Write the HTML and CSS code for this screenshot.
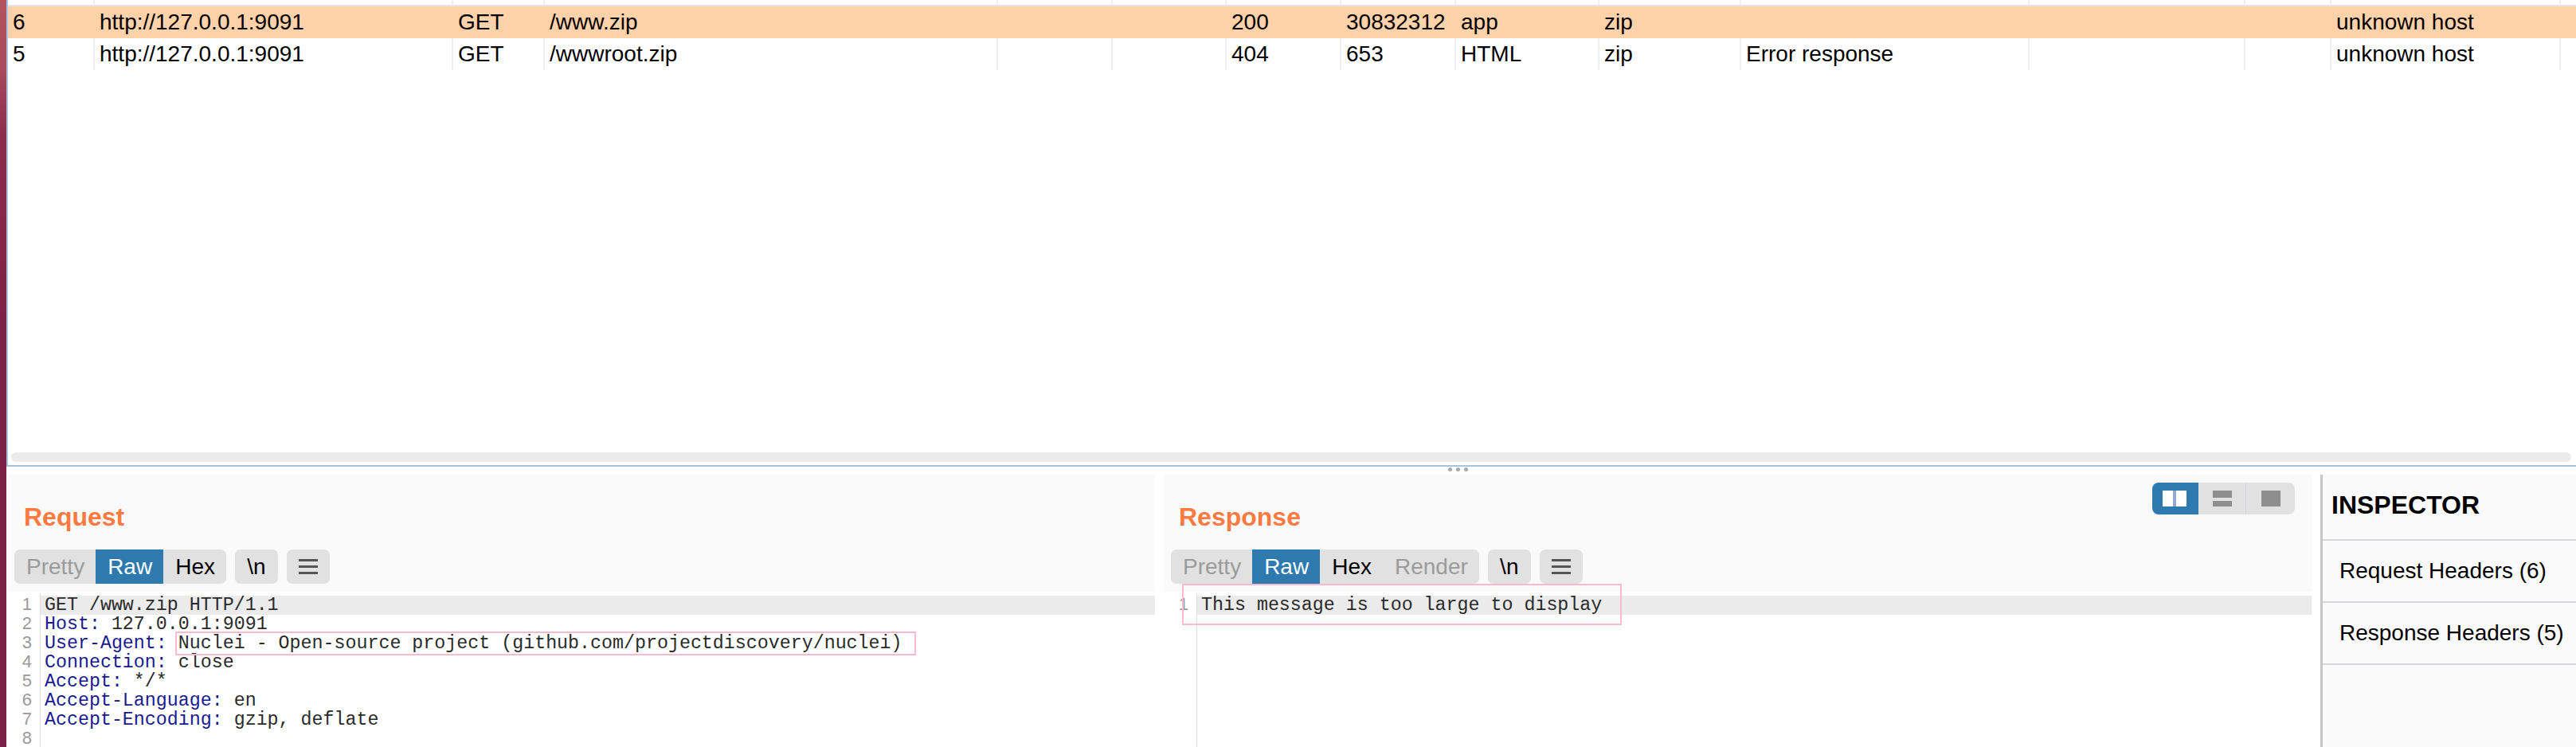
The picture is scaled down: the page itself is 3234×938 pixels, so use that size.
FILE: index.html
```html
<!DOCTYPE html>
<html lang="en">
<head>
<meta charset="utf-8">
<title>Proxy history</title>
<link rel="stylesheet" href="styles.css">
</head>
<body>
<div class="wall"></div>
<div class="app">
  <section class="history">
    <div class="grid head">
      <div class="c"></div><div class="c"></div><div class="c"></div><div class="c"></div><div class="c"></div>
      <div class="c"></div><div class="c"></div><div class="c"></div><div class="c"></div><div class="c"></div>
      <div class="c"></div><div class="c"></div><div class="c"></div><div class="c"></div><div class="c"></div>
    </div>
    <div class="grid row sel">
      <div class="c">6</div><div class="c">http://127.0.0.1:9091</div><div class="c">GET</div><div class="c">/www.zip</div><div class="c"></div>
      <div class="c"></div><div class="c">200</div><div class="c">30832312</div><div class="c">app</div><div class="c">zip</div>
      <div class="c"></div><div class="c"></div><div class="c"></div><div class="c">unknown host</div><div class="c"></div>
    </div>
    <div class="grid row">
      <div class="c">5</div><div class="c">http://127.0.0.1:9091</div><div class="c">GET</div><div class="c">/wwwroot.zip</div><div class="c"></div>
      <div class="c"></div><div class="c">404</div><div class="c">653</div><div class="c">HTML</div><div class="c">zip</div>
      <div class="c">Error response</div><div class="c"></div><div class="c"></div><div class="c">unknown host</div><div class="c"></div>
    </div>
    <div class="fill"></div>
    <div class="hscroll"></div>
  </section>

  <div class="splitter"><span class="dot"></span><span class="dot"></span><span class="dot"></span></div>

  <div class="panes">
    <section class="pane req">
      <div class="pane-head">
        <h2 class="title">Request</h2>
      </div>
      <div class="toolbar">
        <div class="seg">
          <span class="btn dim">Pretty</span><span class="btn on">Raw</span><span class="btn">Hex</span>
        </div>
        <span class="sbtn">\n</span>
        <span class="sbtn menu"><i></i><i></i><i></i></span>
      </div>
      <div class="code">
        <div class="gutter">
          <div>1</div><div>2</div><div>3</div><div>4</div><div>5</div><div>6</div><div>7</div><div>8</div>
        </div>
        <div class="lines">
          <div class="line cur">GET /www.zip HTTP/1.1</div>
          <div class="line"><span class="k">Host:</span> 127.0.0.1:9091</div>
          <div class="line"><span class="k">User-Agent:</span> <span class="mark">Nuclei - Open-source project (github.com/projectdiscovery/nuclei)</span></div>
          <div class="line"><span class="k">Connection:</span> close</div>
          <div class="line"><span class="k">Accept:</span> */*</div>
          <div class="line"><span class="k">Accept-Language:</span> en</div>
          <div class="line"><span class="k">Accept-Encoding:</span> gzip, deflate</div>
          <div class="line"></div>
        </div>
      </div>
    </section>

    <section class="pane res">
      <div class="pane-head">
        <h2 class="title">Response</h2>
        <div class="layout">
          <span class="lay on">
            <svg width="32" height="20" viewBox="0 0 32 20"><rect x="0" y="0" width="13" height="20" fill="#fff"/><rect x="13" y="0" width="4" height="20" fill="#93a9d3"/><rect x="17" y="0" width="13" height="20" fill="#fff"/></svg>
          </span>
          <span class="lay">
            <svg width="24" height="20" viewBox="0 0 24 20"><rect x="0" y="0" width="24" height="9" fill="#8e8e8e"/><rect x="0" y="13" width="24" height="7" fill="#8e8e8e"/></svg>
          </span>
          <span class="lay last">
            <svg width="24" height="20" viewBox="0 0 24 20"><rect x="0" y="0" width="24" height="20" fill="#8e8e8e"/></svg>
          </span>
        </div>
      </div>
      <div class="toolbar">
        <div class="seg">
          <span class="btn dim">Pretty</span><span class="btn on">Raw</span><span class="btn">Hex</span><span class="btn dim">Render</span>
        </div>
        <span class="sbtn">\n</span>
        <span class="sbtn menu"><i></i><i></i><i></i></span>
      </div>
      <div class="code">
        <div class="gutter wide">
          <div>1</div>
        </div>
        <div class="lines">
          <div class="line cur">This message is too large to display</div>
        </div>
      </div>
      <div class="annot"></div>
    </section>

    <aside class="inspector">
      <h2 class="ins-title">INSPECTOR</h2>
      <div class="ins-item">Request Headers (6)</div>
      <div class="ins-item">Response Headers (5)</div>
    </aside>
  </div>
</div>
</body>
</html>
```

FILE: styles.css
```css
* { box-sizing: border-box; }

html, body {
  margin: 0;
  padding: 0;
}

body {
  width: 3234px;
  height: 938px;
  overflow: hidden;
  display: flex;
  background: #ffffff;
  font-family: "Liberation Sans", Arial, sans-serif;
  color: #000;
}

.wall {
  width: 8px;
  flex: none;
  background: linear-gradient(#b3525e 0px, #a9495b 90px, #8d2b4c 170px, #7e2146 400px, #7a1f45 938px);
}

.app {
  flex: 1;
  display: flex;
  flex-direction: column;
  min-width: 0;
}

/* ---------- history table ---------- */
.history {
  height: 586px;
  flex: none;
  display: flex;
  flex-direction: column;
  background: #fff;
  border-left: 2px solid #a6c4e2;
  border-bottom: 2px solid #a6c4e2;
}

.grid {
  display: grid;
  grid-template-columns: 107px 450px 115px 569px 144px 143px 144px 144px 180px 178px 362px 271px 108px 288px 1fr;
}

.head {
  height: 8px;
  border-bottom: 2px solid #e6e6e6;
}

.c {
  padding-left: 6px;
  border-left: 2px solid #efefef;
  white-space: nowrap;
  overflow: hidden;
}

.c:first-child {
  border-left: none;
}

.row {
  height: 40px;
  line-height: 40px;
  font-size: 28px;
}

.row.sel {
  background: #ffd2aa;
}

.row.sel .c {
  border-left-color: transparent;
}

.fill {
  flex: 1;
}

.hscroll {
  height: 12px;
  margin: 0 6px 4px 4px;
  border-radius: 6px;
  background: #ebebeb;
}

/* ---------- splitter ---------- */
.splitter {
  height: 10px;
  flex: none;
  display: flex;
  align-items: flex-start;
  gap: 5px;
  padding: 1px 0 0 1810px;
  background: #fff;
}

.dot {
  width: 5px;
  height: 5px;
  border-radius: 50%;
  background: #a9a9a9;
}

/* ---------- bottom panes ---------- */
.panes {
  flex: 1;
  display: flex;
  padding-left: 2px;
  min-height: 0;
}

.pane {
  position: relative;
  display: flex;
  flex-direction: column;
  background: #fafafa;
}

.req {
  width: 1440px;
}

.res {
  width: 1441px;
  margin-left: 11px;
}

.pane-head {
  display: flex;
  justify-content: space-between;
  align-items: flex-start;
  padding: 10px 21px 0 20px;
}

.res .pane-head {
  padding-left: 19px;
}

.title {
  margin: 25px 0 0;
  font-size: 32px;
  line-height: 37px;
  font-weight: bold;
  color: #ff7a40;
}

.toolbar {
  display: flex;
  gap: 11px;
  margin-top: 22px;
  padding-left: 8px;
  height: 43px;
}

.res .toolbar {
  padding-left: 9px;
}

.seg {
  display: flex;
  background: #e1e1e1;
  border-radius: 7px;
  overflow: hidden;
}

.btn {
  padding: 0 14px 0 15px;
  font-size: 28px;
  line-height: 43px;
  color: #000;
}

.btn.dim {
  color: #9b9b9b;
}

.btn.on {
  background: #2e79ae;
  color: #fff;
}

.sbtn {
  width: 54px;
  display: flex;
  align-items: center;
  justify-content: center;
  background: #e1e1e1;
  border-radius: 7px;
  font-size: 28px;
  line-height: 43px;
}

.menu {
  flex-direction: column;
  gap: 5px;
}

.menu i {
  display: block;
  width: 24px;
  height: 3px;
  background: #555;
}

.code {
  flex: 1;
  display: flex;
  margin-top: 10px;
  padding-top: 5px;
  background: #fff;
  font-family: "Liberation Mono", "Courier New", monospace;
  font-size: 23.3px;
  line-height: 24px;
  min-height: 0;
  overflow: hidden;
}

.gutter {
  width: 41px;
  flex: none;
  padding-right: 10px;
  text-align: right;
  color: #9a9a9a;
  font-family: "Liberation Sans", Arial, sans-serif;
  font-size: 22px;
  line-height: 24px;
  border-right: 1px solid #dedede;
  margin-top: -3px;
  padding-top: 2px;
}

.gutter.wide {
  width: 42px;
}

.lines {
  flex: 1;
  min-width: 0;
}

.line {
  height: 24px;
  padding-left: 5px;
  white-space: pre;
  color: #2a2a2a;
}

.line.cur {
  background: #ebebeb;
}

.k {
  color: #1a1a8e;
}

.mark {
  outline: 2px solid #fbb9d2;
  outline-offset: 0;
  margin-left: -2px;
  padding: 0 15px 0 2px;
}

.annot {
  position: absolute;
  left: 23px;
  top: 137px;
  width: 552px;
  height: 52px;
  border: 2px solid #fcb9d2;
  pointer-events: none;
}

/* layout toggle */
.layout {
  display: flex;
  height: 40px;
  background: #e1e1e1;
  border-radius: 8px;
  overflow: hidden;
}

.lay {
  width: 60px;
  display: flex;
  align-items: center;
  justify-content: center;
  border-right: 1px solid #d4d4e0;
}

.lay.on {
  width: 58px;
  background: #2e79ae;
  border-right: none;
}

.lay.last {
  width: 61px;
  border-right: none;
}

/* ---------- inspector ---------- */
.inspector {
  flex: 1;
  margin-left: 11px;
  background: #fafafa;
  border-left: 3px solid #c6c6c6;
}

.ins-title {
  margin: 0;
  height: 83px;
  padding: 20px 0 0 11px;
  font-size: 32px;
  line-height: 37px;
  font-weight: bold;
  color: #000;
  border-bottom: 2px solid #d7d7dd;
}

.ins-item {
  height: 78px;
  padding-left: 21px;
  font-size: 28px;
  line-height: 76px;
  border-bottom: 2px solid #d7d7dd;
}
```
